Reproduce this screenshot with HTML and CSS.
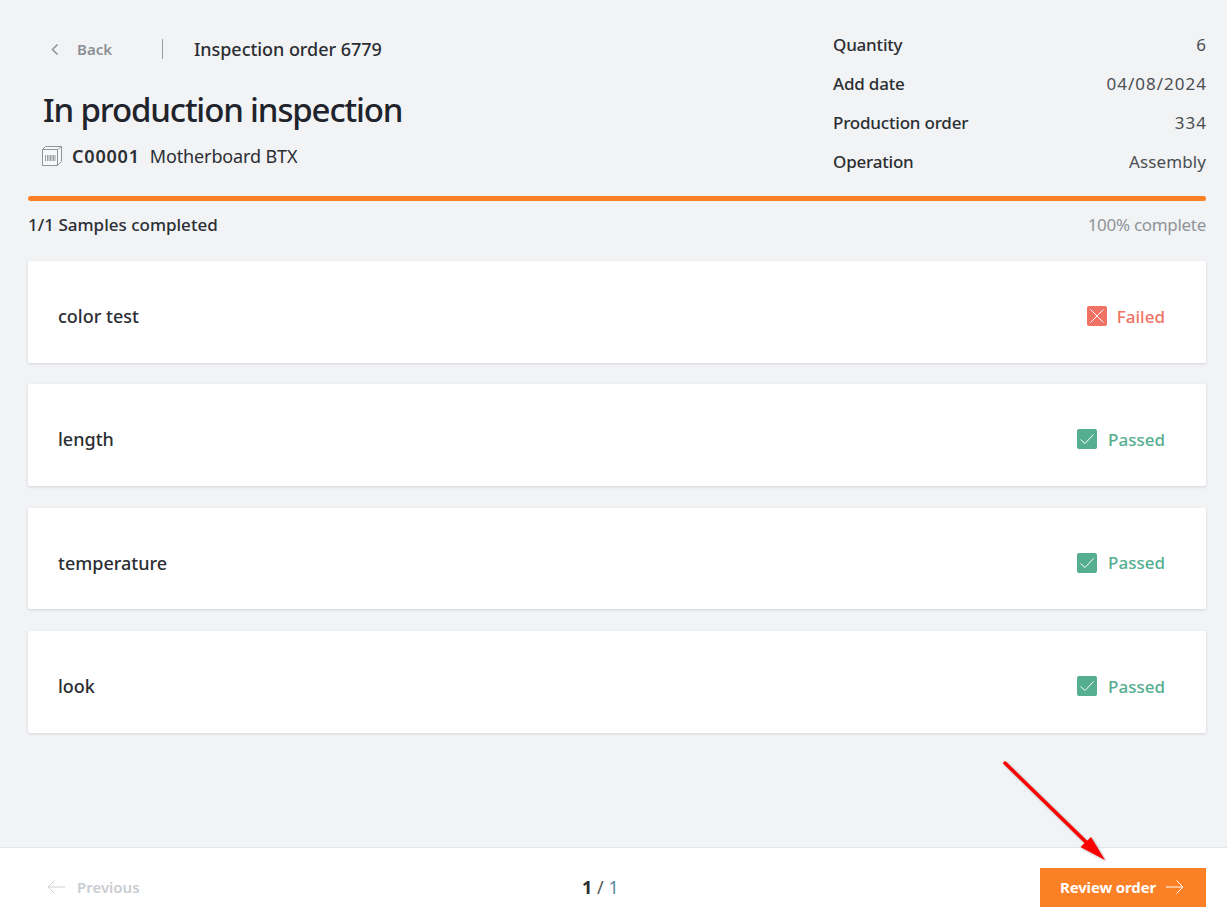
FILE: index.html
```html
<!DOCTYPE html>
<html lang="en">
<head>
<meta charset="utf-8">
<title>In production inspection</title>
<link rel="stylesheet" href="styles.css">
</head>
<body>
<div class="page">
  <main class="content">
    <header class="head">
      <div class="head-left">
        <div class="crumbs">
          <a class="back">
            <svg class="back-icon" width="9" height="13" viewBox="0 0 9 13"><path d="M7.500 1.500 2.500 6.500l5 5" fill="none" stroke="#8b9096" stroke-width="1.500"/></svg>
            <span>Back</span>
          </a>
          <span class="order">Inspection order 6779</span>
        </div>
        <h1 class="title">In production inspection</h1>
        <div class="product">
          <svg class="box" width="20" height="20" viewBox="0 0 20 20"><path d="M.5 3.500h15v16H.5zM.5 3.500l3-3h16v15l-4 4M15.500 3.500l4-3" fill="#f7f8f9" stroke="#8f9499"/><path d="M3.500 9v6M5.500 9v6M7 9v6M8.500 9v6M10 9v6M11.500 9v6M13 9v6" stroke="#8f9499" stroke-width=".9" fill="none"/></svg>
          <b>C00001</b>
          <span class="pname">Motherboard BTX</span>
        </div>
      </div>
      <dl class="meta">
        <div class="meta-row"><dt>Quantity</dt><dd>6</dd></div>
        <div class="meta-row"><dt>Add date</dt><dd class="num">04/08/2024</dd></div>
        <div class="meta-row"><dt>Production order</dt><dd class="num">334</dd></div>
        <div class="meta-row"><dt>Operation</dt><dd>Assembly</dd></div>
      </dl>
    </header>
    <div class="bar"></div>
    <div class="progress">
      <span class="done">1/1 Samples completed</span>
      <span class="pct">100% complete</span>
    </div>
    <section class="cards">
      <article class="card"><span class="name">color test</span>
        <span class="status fail"><svg class="ico" width="20" height="20" viewBox="0 0 20 20"><rect width="20" height="20" rx="2" fill="#f07264"/><path d="M3.500 3.500l13 13M16.500 3.500l-13 13" stroke="#fff" fill="none"/></svg>Failed</span></article>
      <article class="card"><span class="name">length</span>
        <span class="status pass"><svg class="ico" width="20" height="20" viewBox="0 0 20 20"><rect width="20" height="20" rx="2" fill="#55ae90"/><path d="M3.500 10.500l4.500 4 8.500-9" stroke="#fff" fill="none"/></svg>Passed</span></article>
      <article class="card"><span class="name">temperature</span>
        <span class="status pass"><svg class="ico" width="20" height="20" viewBox="0 0 20 20"><rect width="20" height="20" rx="2" fill="#55ae90"/><path d="M3.500 10.500l4.500 4 8.500-9" stroke="#fff" fill="none"/></svg>Passed</span></article>
      <article class="card"><span class="name">look</span>
        <span class="status pass"><svg class="ico" width="20" height="20" viewBox="0 0 20 20"><rect width="20" height="20" rx="2" fill="#55ae90"/><path d="M3.500 10.500l4.500 4 8.500-9" stroke="#fff" fill="none"/></svg>Passed</span></article>
    </section>
  </main>
  <footer class="foot">
    <a class="prev">
      <svg width="18" height="14" viewBox="0 0 18 14"><path d="M18 7H1M7.500.5 1 7l6.500 6.500" fill="none" stroke="#cdd0d4" stroke-width="1"/></svg>
      <span>Previous</span>
    </a>
    <div class="pager"><b>1</b> <span class="slash">/</span> <span class="total">1</span></div>
    <a class="review">
      <span>Review order</span>
      <svg width="18" height="14" viewBox="0 0 18 14"><path d="M0 7h17M10.500.5 17 7l-6.500 6.500" fill="none" stroke="#fff" stroke-width="1"/></svg>
    </a>
  </footer>
  <svg class="annot" width="120" height="120" viewBox="0 0 120 120"><path d="M5 5 87 85" stroke="#f00" stroke-width="3.500" stroke-linecap="round" fill="none"/><path d="M80.500 89 91 79 105 102z" fill="#f00"/></svg>
</div>
</body>
</html>
```
FILE: styles.css
```css
* { box-sizing: border-box; }
html, body { margin: 0; height: 100%; }
body { background: #f2f3f5; font-family: "Noto Sans", sans-serif; color: #2b2e33; font-size: 17px; }
.page { position: relative; height: 920px; display: flex; flex-direction: column; overflow: hidden; }
.content { flex: 1; padding: 26px 21px 0 28px; }
.head { display: flex; justify-content: space-between; height: 170px; }
.head-left { padding-left: 15px; }
.crumbs { display: flex; align-items: center; height: 22px; margin-top: 12px; }
.back { display: flex; align-items: center; width: 120px; height: 20px; border-right: 1px solid #9a9ea3; padding-left: 7px; color: #8b9096; font-size: 15px; font-weight: 600; }
.back-icon { margin-right: 18px; }
.order { margin-left: 31px; font-size: 18px; font-weight: 500; letter-spacing: -.05px; }
.title { margin: 28px 0 0; font-size: 33px; line-height: 44px; font-weight: 500; letter-spacing: -1.150px; color: #1f232b; }
.product { display: flex; align-items: center; margin-top: 12px; margin-left: -1px; font-size: 18px; line-height: 24px; }
.box { margin-right: 10px; }
.product b { font-weight: 600; margin-right: 10px; letter-spacing: .8px; }
.pname { letter-spacing: -.13px; }
.meta { margin: 0; width: 373px; }
.meta-row { display: flex; justify-content: space-between; height: 39px; line-height: 38px; font-size: 17px; }
.meta dt { font-weight: 500; letter-spacing: -.2px; }
.meta dd { margin: 0; color: #4b4e52; letter-spacing: .1px; }
.meta .num { letter-spacing: 1px; margin-right: -1px; }
.bar { height: 5px; background: #fd7f25; border-radius: 3px; }
.progress { display: flex; justify-content: space-between; margin-top: 12px; font-size: 17px; line-height: 23px; }
.done { font-weight: 500; }
.pct { color: #8f9499; letter-spacing: -.3px; }
.cards { display: flex; flex-direction: column; gap: 21.500px; margin-top: 25px; }
.card { display: flex; justify-content: space-between; align-items: center; height: 101.800px; padding: 8.600px 41px 0 30px; background: #fff; border-radius: 2px; box-shadow: 0 1px 3px rgba(40, 50, 80, .16); }
.name { font-size: 18px; font-weight: 500; }
.status { display: flex; align-items: center; font-size: 17px; font-weight: 500; }
.ico { margin-right: 10px; }
.pass .ico { margin-right: 11px; }
.fail { color: #f07264; }
.pass { color: #55ae90; }
.foot { display: flex; justify-content: space-between; align-items: center; position: relative; height: 73px; padding: 6px 21px 0 47px; background: #fff; border-top: 1px solid #e4e6ea; }
.prev { display: flex; align-items: center; gap: 12px; color: #c9ccd1; font-size: 15px; font-weight: 600; }
.pager { position: absolute; left: 582px; top: 27px; font-size: 18px; line-height: 24px; }
.pager b { font-weight: 700; }
.slash { color: #555; }
.total { color: #5a8a9a; }
.review { display: flex; align-items: center; justify-content: center; gap: 10px; width: 166px; height: 39px; padding-right: 2px; background: #fc8026; color: #fff; font-size: 15px; font-weight: 700; letter-spacing: -.15px; }
.annot { position: absolute; left: 1000px; top: 758px; filter: drop-shadow(1px 1px 1px rgba(0, 0, 0, .35)); }
```
